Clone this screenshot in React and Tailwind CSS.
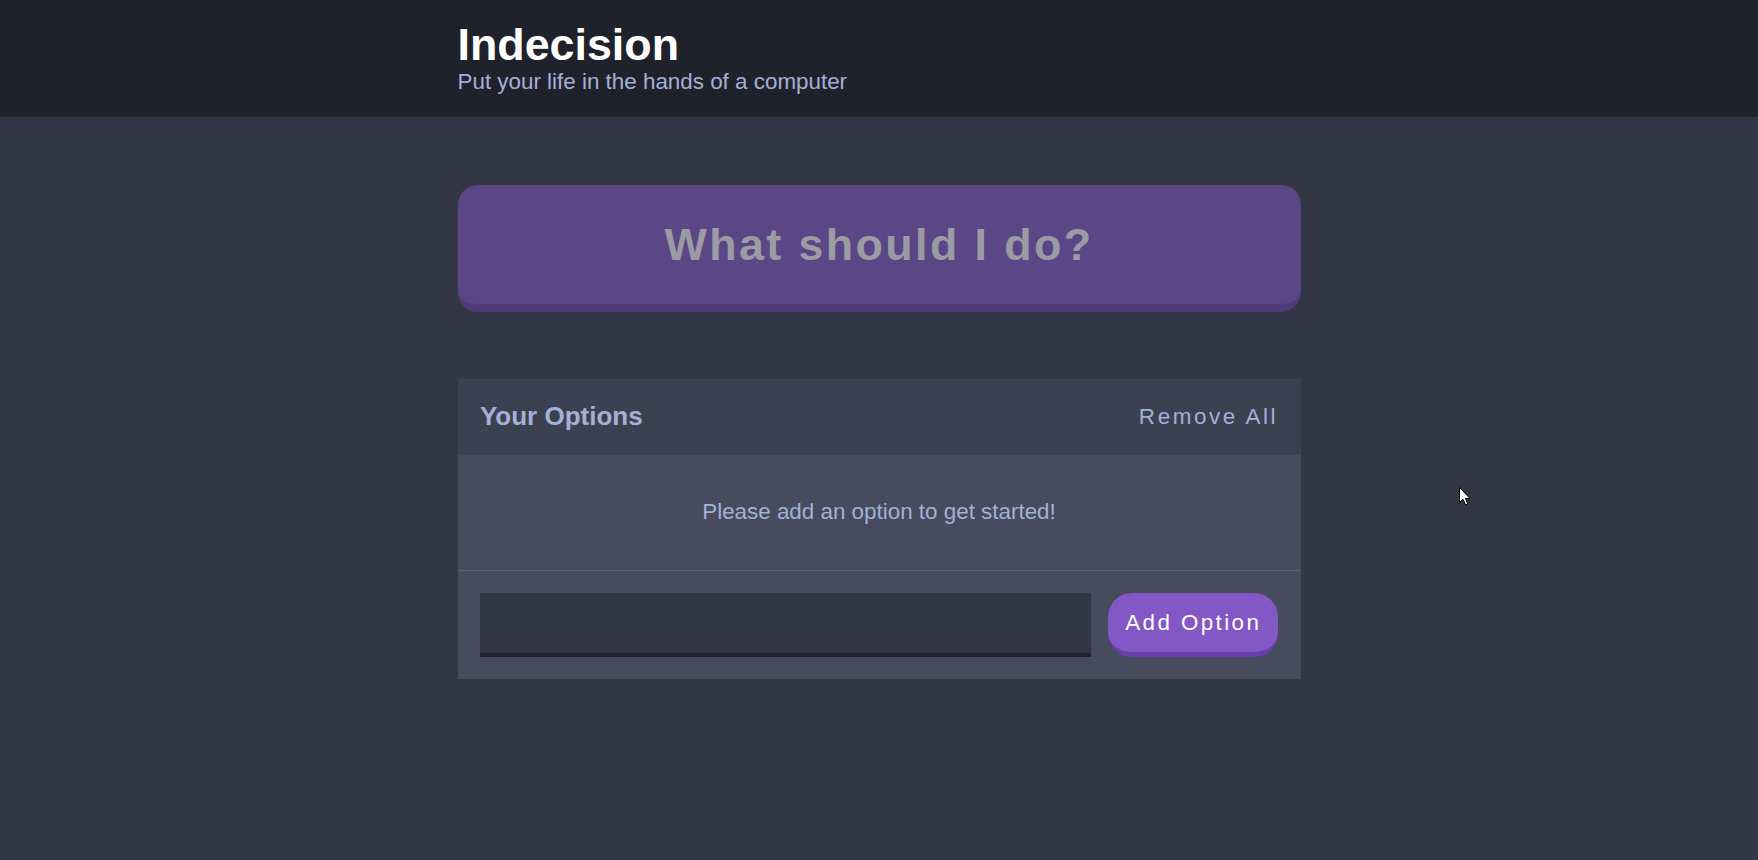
export default function App() {
  return (
    <div className="relative min-h-screen bg-[#333745] font-['Liberation_Sans',Arial,sans-serif]">
      <Header />
      <main className="mx-auto w-[843px] pt-[68px]">
        <button
          disabled
          className="block w-full rounded-[20px] border-b-[8.4px] border-[#4e3b78] bg-[#5b4785] py-[33.6px] text-[44.8px] font-bold leading-[normal] tracking-[2.4px] text-[#9a9ba3]"
        >
          What should I do?
        </button>

        <div className="mt-[67.2px]">
          <div className="flex items-center justify-between bg-[#3c4151] p-[22.4px]">
            <h3 className="text-[26px] font-bold leading-[normal] text-[#a5afd7]">Your Options</h3>
            <button className="text-[22.4px] leading-[normal] tracking-[2.6px] text-[#a5afd7]">Remove All</button>
          </div>
          <div className="bg-[#464b5e]">
            <p className="border-b border-[#5b6075] p-[44.8px] text-center text-[22.4px] leading-[normal] text-[#a5afd7]">
              Please add an option to get started!
            </p>
            <form className="flex p-[22.4px]" onSubmit={(e) => e.preventDefault()}>
              <input
                type="text"
                name="option"
                className="mr-[17px] flex-1 border-b-[4.2px] border-[#20222b] bg-[#333745] p-[16.8px] text-[22.4px] leading-[normal] text-[#a5afd7] outline-none"
              />
              <button className="rounded-[24px] border-b-[5.6px] border-[#6a3fab] bg-[#8357c5] px-[16.8px] text-[22.4px] leading-[normal] tracking-[2.4px] text-white">
                Add Option
              </button>
            </form>
          </div>
        </div>
      </main>

      {/* mouse pointer left in the capture */}
      <svg className="absolute left-[1459px] top-[487px]" width="12" height="19" viewBox="0 0 12 19">
        <path d="M0.5 0.5 L0.5 15.5 L4 12.2 L6.6 18 L8.8 17 L6.3 11.4 L11 11.4 Z" fill="white" stroke="black" strokeWidth="1" />
      </svg>
    </div>
  );
}

function Header() {
  return (
    <header className="bg-[#20222b] py-[22.4px]">
      <div className="mx-auto w-[843px]">
        <h1 className="text-[44.8px] font-bold leading-none text-white">Indecision</h1>
        <h2 className="mt-[2px] text-[22.4px] leading-[1.15] text-[#a5afd7]">Put your life in the hands of a computer</h2>
      </div>
    </header>
  );
}
